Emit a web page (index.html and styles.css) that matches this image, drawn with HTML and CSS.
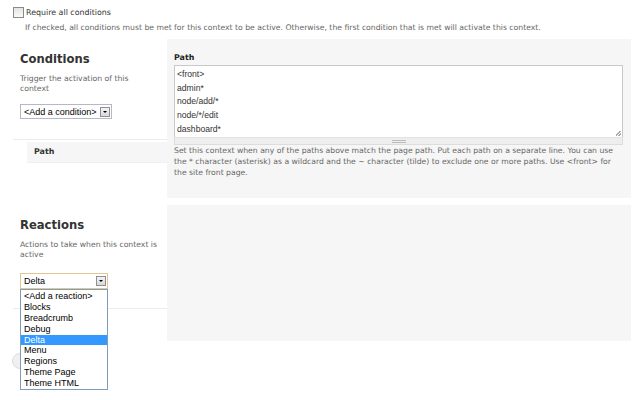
FILE: index.html
```html
<!DOCTYPE html>
<html>
<head>
<meta charset="utf-8">
<link rel="stylesheet" href="styles.css">
</head>
<body>
<div class="page">
  <div class="check-row"><span class="checkbox"></span><span class="check-label">Require all conditions</span></div>
  <div class="check-desc">If checked, all conditions must be met for this context to be active. Otherwise, the first condition that is met will activate this context.</div>

  <section class="block block-conditions">
    <div class="side">
      <h2 class="side-title">Conditions</h2>
      <p class="side-desc">Trigger the activation of this context</p>
      <div class="select sel-cond"><span class="sel-text">&lt;Add a condition&gt;</span><span class="sel-arrow"></span></div>
      <div class="tabs"><div class="tab">Path</div></div>
    </div>
    <div class="panel">
      <div class="field-label">Path</div>
      <div class="textarea">
        <div class="ta-line">&lt;front&gt;</div>
        <div class="ta-line">admin*</div>
        <div class="ta-line">node/add/*</div>
        <div class="ta-line">node/*/edit</div>
        <div class="ta-line">dashboard*</div>
        <span class="resize"></span>
      </div>
      <div class="grippie"><span class="grip"></span></div>
      <p class="panel-desc">Set this context when any of the paths above match the page path. Put each path on a separate line. You can use the * character (asterisk) as a wildcard and the ~ character (tilde) to exclude one or more paths. Use &lt;front&gt; for the site front page.</p>
    </div>
  </section>

  <section class="block block-reactions">
    <div class="side">
      <h2 class="side-title">Reactions</h2>
      <p class="side-desc side-desc-wide">Actions to take when this context is active</p>
      <div class="select-wrap">
        <div class="select sel-react"><span class="sel-text">Delta</span><span class="sel-arrow"></span></div>
        <ul class="dropdown">
          <li>&lt;Add a reaction&gt;</li>
          <li>Blocks</li>
          <li>Breadcrumb</li>
          <li>Debug</li>
          <li class="active">Delta</li>
          <li>Menu</li>
          <li>Regions</li>
          <li>Theme Page</li>
          <li>Theme HTML</li>
        </ul>
      </div>
      <div class="tabs tabs-react"><span class="ghost-btn"></span></div>
    </div>
    <div class="panel panel-react"></div>
  </section>
</div>
</body>
</html>
```

FILE: styles.css
```css
html, body {
  margin: 0;
  padding: 0;
  background: #fff;
}
.page {
  width: 640px;
  height: 400px;
  overflow: hidden;
  font-family: "DejaVu Sans", Verdana, sans-serif;
  color: #333;
}
.check-row {
  display: flex;
  align-items: center;
  padding: 7px 0 0 13px;
  height: 10px;
}
.checkbox {
  width: 9px;
  height: 9px;
  border: 1px solid #8a8a8a;
  background: linear-gradient(#e4e4e4, #fafafa);
  margin-right: 2px;
}
.check-label {
  font-size: 7.9px;
  color: #333;
}
.check-desc {
  font-size: 7.7px;
  color: #666;
  padding: 6px 0 0 25px;
  height: 10px;
}
.block {
  display: grid;
  grid-template-columns: 167px 1fr;
  margin-right: 9px;
}
.block-conditions {
  margin-top: 6px;
}
.block-reactions {
  margin-top: 7px;
}
.side {
  position: relative;
}
.side-title {
  margin: 0;
  padding: 12px 0 0 20px;
  font-size: 11.6px;
  line-height: 16px;
  font-weight: bold;
  color: #333;
}
.side-desc {
  margin: 7px 0 0 20px;
  width: 136px;
  font-size: 7.7px;
  line-height: 10px;
  color: #666;
}
.side-desc-wide {
  width: 142px;
}
.select {
  display: flex;
  align-items: center;
  justify-content: space-between;
  box-sizing: border-box;
  background: #fff;
  font-family: "Liberation Sans", Arial, sans-serif;
  font-size: 9px;
  color: #000;
}
.sel-cond {
  width: 92px;
  height: 15px;
  margin: 10px 0 0 20px;
  border: 1px solid #b5b8c8;
  padding: 0 1px 0 3px;
}
.sel-arrow {
  width: 10px;
  height: 10px;
  box-sizing: border-box;
  border: 1px solid #8f8f8f;
  background: linear-gradient(#f4f4f4, #d8d8d8);
  position: relative;
}
.sel-arrow::after {
  content: "";
  position: absolute;
  left: 2px;
  top: 3px;
  border-left: 2px solid transparent;
  border-right: 2px solid transparent;
  border-top: 2px solid #000;
}
.tabs {
  margin: 20px 0 0 13px;
  border-top: 1px solid #ececec;
  padding-top: 2px;
}
.tab {
  margin-left: 14px;
  background: #f6f6f6;
  height: 20px;
  line-height: 20px;
  padding-left: 7px;
  font-size: 7.9px;
  font-weight: bold;
  color: #333;
  border-bottom: 1px solid #f0f0f0;
}
.panel {
  background: #f6f6f6;
  padding: 12px 8px 20px 7px;
}
.field-label {
  font-size: 7.9px;
  font-weight: bold;
  line-height: 14px;
  color: #222;
}
.textarea {
  position: relative;
  box-sizing: border-box;
  height: 72px;
  border: 1px solid #c8c8c8;
  border-bottom: none;
  background: #fff;
  padding: 2px 0 0 2px;
  font-family: "Liberation Sans", Arial, sans-serif;
  font-size: 8.6px;
  color: #333;
}
.ta-line {
  height: 13.7px;
  line-height: 13.7px;
}
.resize {
  position: absolute;
  right: 1px;
  bottom: 1px;
  width: 5px;
  height: 5px;
  background: linear-gradient(135deg, transparent 40%, #aaa 40%, #aaa 52%, transparent 52%, transparent 70%, #aaa 70%, #aaa 82%, transparent 82%);
}
.grippie {
  height: 6px;
  background: #eee;
  border: 1px solid #ddd;
  border-top: 1px solid #e2e2e2;
  display: flex;
  justify-content: center;
  align-items: center;
}
.grip {
  width: 14px;
  height: 3px;
  border-top: 1px solid #bbb;
  border-bottom: 1px solid #bbb;
  box-sizing: border-box;
}
.panel-desc {
  margin: 0;
  font-size: 7.7px;
  line-height: 11px;
  color: #666;
}
.select-wrap {
  position: relative;
  margin: 13px 0 0 20px;
  width: 88px;
}
.sel-react {
  width: 88px;
  height: 16px;
  border: 1px solid #e3c78f;
  padding: 0 1px 0 3px;
  font-size: 9px;
}
.dropdown {
  position: absolute;
  z-index: 2;
  left: 0;
  top: 16px;
  width: 88px;
  box-sizing: border-box;
  margin: 0;
  padding: 1px 0 0 0;
  list-style: none;
  background: #fff;
  border: 1px solid #7f9db9;
  font-family: "Liberation Sans", Arial, sans-serif;
  font-size: 9px;
  color: #000;
}
.dropdown li {
  height: 10.9px;
  line-height: 10.9px;
  padding-left: 3px;
}
.dropdown li.active {
  background: #3399ff;
  color: #fff;
}
.tabs-react {
  position: relative;
  margin-top: 19px;
  height: 60px;
}
.ghost-btn {
  position: absolute;
  left: -1px;
  top: 44px;
  width: 30px;
  height: 14px;
  border-radius: 8px;
  background: #f0f0f0;
  border: 1px solid #dcdcdc;
}
.panel-react {
  height: 136px;
  padding: 0;
}
```
